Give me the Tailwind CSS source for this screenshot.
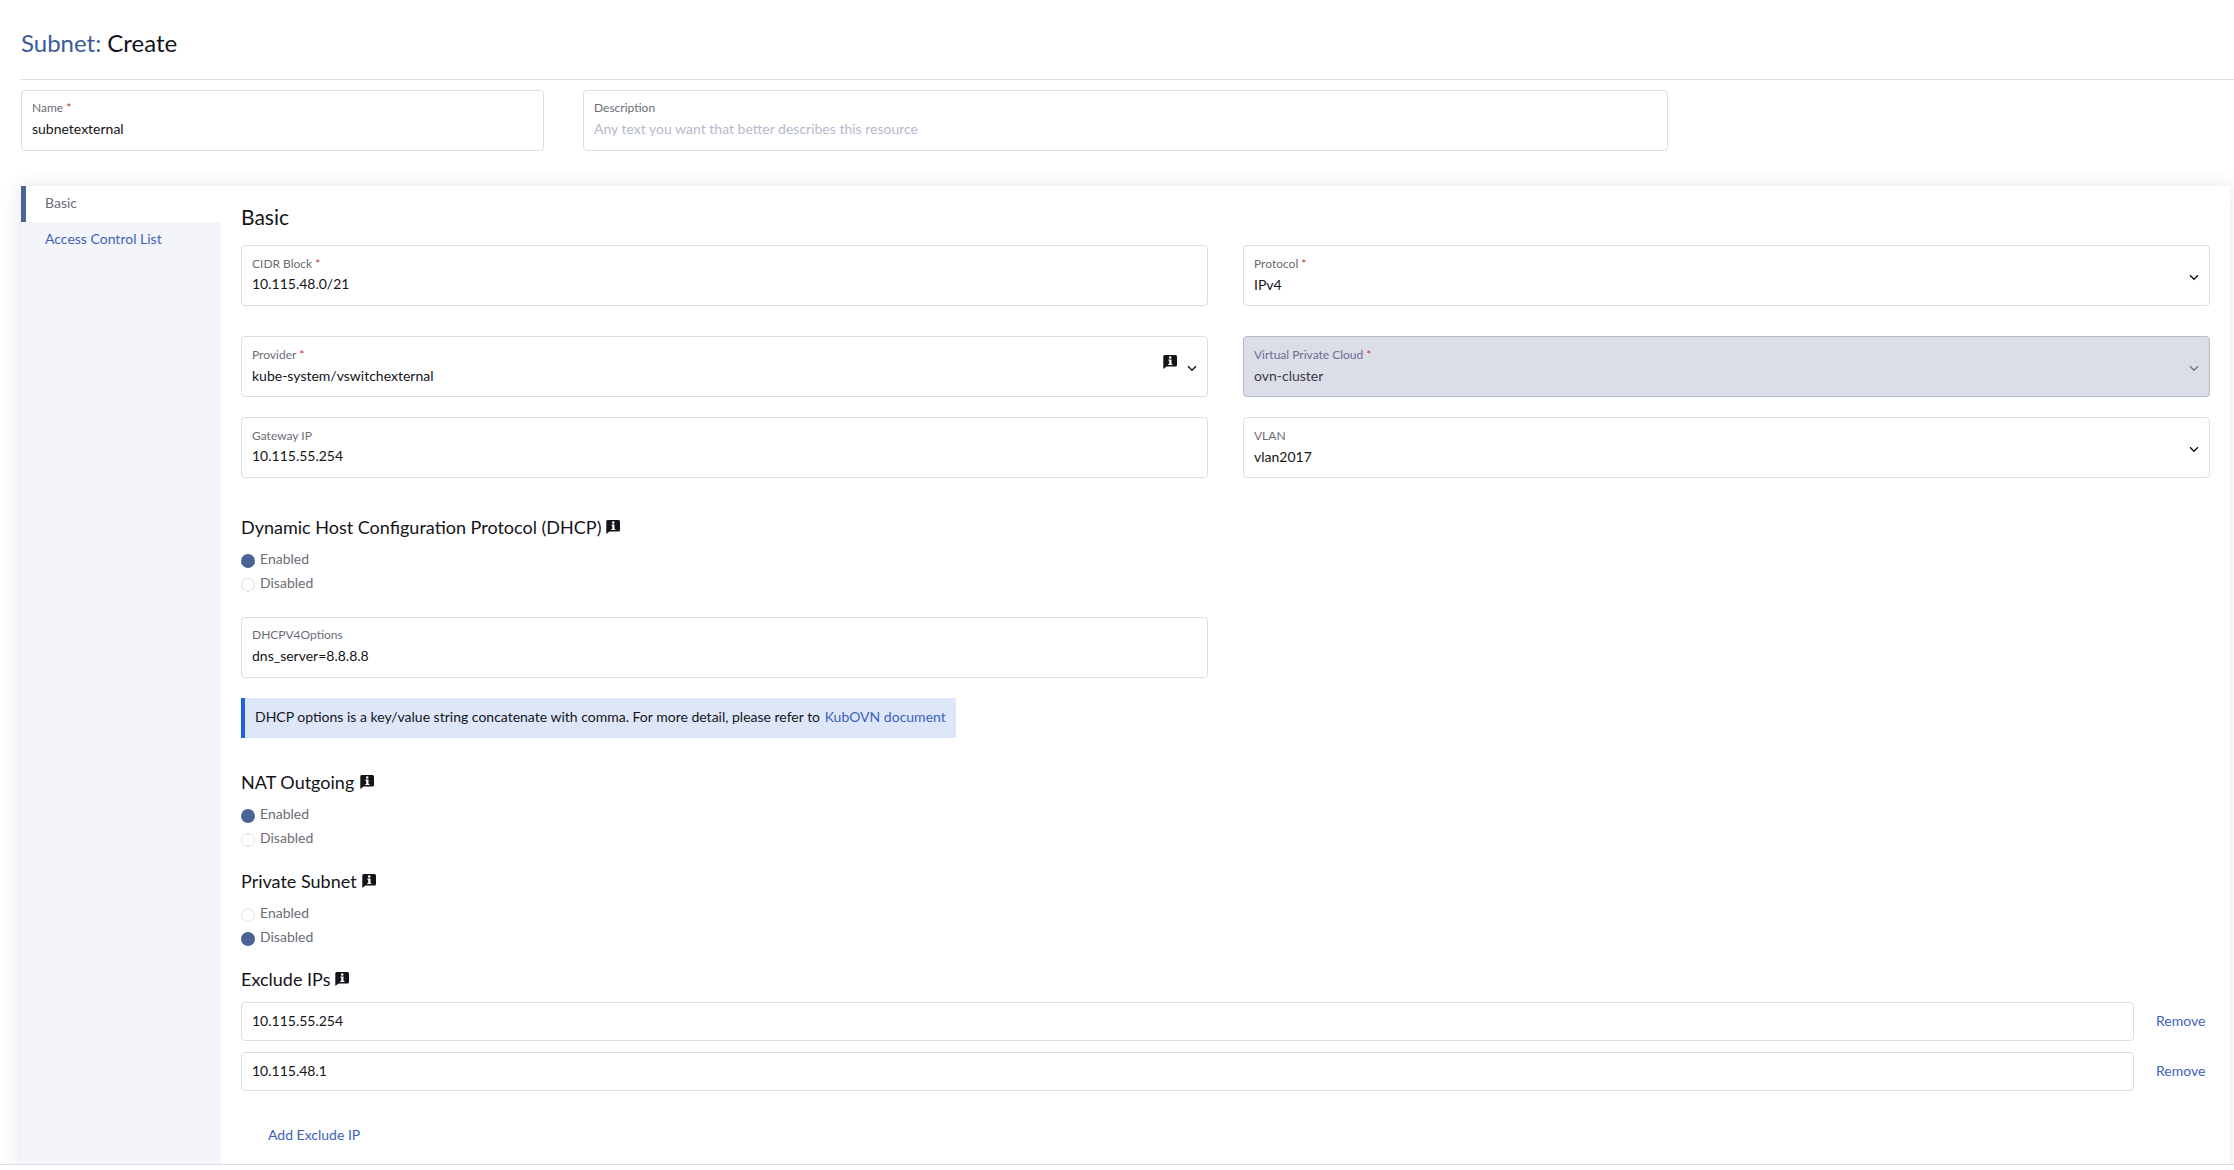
<!DOCTYPE html>
<html lang="en">

<head>
	<meta charset="UTF-8" />
	<meta name="viewport" content="width=device-width, initial-scale=1.0" />
	<title>Subnet: Create</title>
	<script src="https://cdn.jsdelivr.net/npm/@tailwindcss/browser@4"></script>
</head>

<body class="bg-white text-[#141419] text-sm [font-family:Lato,sans-serif] h-[1170px] overflow-hidden">

	<!-- icon used next to headings -->
	<svg class="hidden">
		<symbol id="info" viewBox="0 0 14 14">
			<path fill="#141419" d="M1.5 0h11A1.5 1.5 0 0 1 14 1.5v8.5a1.5 1.5 0 0 1-1.5 1.5H3.6L0.3 14V1.5A1.5 1.5 0 0 1 1.5 0z" />
			<circle cx="7.2" cy="2.6" r="1.25" fill="#fff" />
			<path fill="#fff" d="M5.5 4.6h3v4.3h0.9v1.2H5.2V8.9h1V5.8h-0.7z" />
		</symbol>
		<symbol id="chev" viewBox="0 0 10 7">
			<path d="M1 1.2l4 4 4-4" fill="none" stroke="#141419" stroke-width="1.4" />
		</symbol>
	</svg>

	<div class="h-[1164px] px-[21px] pr-[4px] overflow-hidden">
		<header class="h-[80px] border-b border-[#dcdee7] -mr-[4px] flex items-center pt-[6px]">
			<h1 class="text-2xl font-normal"><span class="text-[#3d5a98]">Subnet:</span> Create</h1>
		</header>

		<div class="flex gap-[39px] mt-[10px]">
			<div class="w-[523px] h-[61px] border border-[#dcdee7] rounded px-[10px] pt-[8px]">
				<div class="text-xs text-[#6c6c76] leading-[18px]">Name <span class="text-[#c0392b]">*</span></div>
				<div class="leading-[24px]">subnetexternal</div>
			</div>
			<div class="w-[1085px] h-[61px] border border-[#dcdee7] rounded px-[10px] pt-[8px]">
				<div class="text-xs text-[#6c6c76] leading-[18px]">Description</div>
				<div class="leading-[24px] text-[#b6b9cc]">Any text you want that better describes this resource</div>
			</div>
		</div>

		<div class="flex mt-[35px] h-[1000px] bg-white shadow-[0_0_20px_rgba(40,50,100,0.12)]">
			<aside class="w-[200px] shrink-0 bg-[#f4f5fa]">
				<div class="h-[36px] bg-white border-l-[5px] border-[#4a6497] pl-[19px] pb-[2px] flex items-center text-[#6c6c76]">Basic</div>
				<div class="h-[36px] pl-[24px] pb-[2px] flex items-center text-[#3d62b8]">Access Control List</div>
			</aside>

			<section class="flex-1 pl-[20px] pr-[20px]">
				<h2 class="h-[59px] pt-[15px] text-[21px] leading-[32px]">Basic</h2>

				<div class="grid grid-cols-[967px_967px] gap-x-[35px]">
					<div class="h-[61px] border border-[#dcdee7] rounded px-[10px] pt-[9px]">
						<div class="text-xs text-[#6c6c76] leading-[18px]">CIDR Block <span class="text-[#c0392b]">*</span></div>
						<div class="leading-[22px]">10.115.48.0/21</div>
					</div>
					<div class="h-[61px] border border-[#dcdee7] rounded px-[10px] pt-[9px] flex items-center justify-between">
						<div class="self-start">
							<div class="text-xs text-[#6c6c76] leading-[18px]">Protocol <span class="text-[#c0392b]">*</span></div>
							<div class="leading-[24px]">IPv4</div>
						</div>
						<svg class="w-[10px] h-[7px] -mt-[5px]"><use href="#chev" /></svg>
					</div>

					<div class="mt-[30px] h-[61px] border border-[#dcdee7] rounded px-[10px] pt-[9px] flex items-center justify-between">
						<div class="self-start">
							<div class="text-xs text-[#6c6c76] leading-[18px]">Provider <span class="text-[#c0392b]">*</span></div>
							<div class="leading-[24px]">kube-system/vswitchexternal</div>
						</div>
						<div class="flex items-start gap-[10px] -mt-[15px]">
							<svg class="w-[14px] h-[14px]"><use href="#info" /></svg>
							<svg class="w-[10px] h-[7px] mt-[10px]"><use href="#chev" /></svg>
						</div>
					</div>
					<div class="mt-[30px] h-[61px] border border-[#b6b9cc] bg-[#dcdee7] rounded px-[10px] pt-[9px] flex items-center justify-between">
						<div class="self-start">
							<div class="text-xs text-[#6c6c92] leading-[18px]">Virtual Private Cloud <span class="text-[#c0392b]">*</span></div>
							<div class="leading-[24px] text-[#3a3a48]">ovn-cluster</div>
						</div>
						<svg class="w-[10px] h-[7px] -mt-[5px] opacity-50"><use href="#chev" /></svg>
					</div>

					<div class="mt-[20px] h-[61px] border border-[#dcdee7] rounded px-[10px] pt-[9px]">
						<div class="text-xs text-[#6c6c76] leading-[18px]">Gateway IP</div>
						<div class="leading-[22px]">10.115.55.254</div>
					</div>
					<div class="mt-[20px] h-[61px] border border-[#dcdee7] rounded px-[10px] pt-[9px] flex items-center justify-between">
						<div class="self-start">
							<div class="text-xs text-[#6c6c76] leading-[18px]">VLAN</div>
							<div class="leading-[24px]">vlan2017</div>
						</div>
						<svg class="w-[10px] h-[7px] -mt-[5px]"><use href="#chev" /></svg>
					</div>
				</div>

				<h3 class="mt-[34px] h-[30px] flex items-center gap-[5px] text-lg font-normal">Dynamic Host Configuration Protocol (DHCP) <svg class="w-[14px] h-[14px]"><use href="#info" /></svg></h3>
				<div class="mt-[5px] text-[#6c6c76]">
					<div class="h-[24px] flex items-center gap-[5px]"><span class="w-[14px] h-[14px] mt-[4px] rounded-full bg-[#4a6497]"></span><span class="leading-none">Enabled</span></div>
					<div class="h-[24px] flex items-center gap-[5px]"><span class="w-[14px] h-[14px] mt-[4px] rounded-full border border-[#dcdee7]"></span><span class="leading-none">Disabled</span></div>
				</div>

				<div class="mt-[22px] w-[967px] h-[61px] border border-[#dcdee7] rounded px-[10px] pt-[8px]">
					<div class="text-xs text-[#6c6c76] leading-[18px]">DHCPV4Options</div>
					<div class="leading-[24px]">dns_server=8.8.8.8</div>
				</div>

				<div class="mt-[20px] w-[715px] h-[40px] bg-[#dee7fa] border-l-[4px] border-[#1f63e0] pl-[10px] pb-[2px] flex items-center">
					<span>DHCP options is a key/value string concatenate with comma. For more detail, please refer to <a class="text-[#3d62b8] ml-[1px]">KubOVN document</a></span>
				</div>

				<h3 class="mt-[29px] h-[30px] flex items-center gap-[6px] text-lg font-normal">NAT Outgoing <svg class="w-[14px] h-[14px]"><use href="#info" /></svg></h3>
				<div class="mt-[5px] text-[#6c6c76]">
					<div class="h-[24px] flex items-center gap-[5px]"><span class="w-[14px] h-[14px] mt-[4px] rounded-full bg-[#4a6497]"></span><span class="leading-none">Enabled</span></div>
					<div class="h-[24px] flex items-center gap-[5px]"><span class="w-[14px] h-[14px] mt-[4px] rounded-full border border-[#dcdee7]"></span><span class="leading-none">Disabled</span></div>
				</div>

				<h3 class="mt-[16px] h-[30px] flex items-center gap-[5px] text-lg font-normal">Private Subnet <svg class="w-[14px] h-[14px]"><use href="#info" /></svg></h3>
				<div class="mt-[5px] text-[#6c6c76]">
					<div class="h-[24px] flex items-center gap-[5px]"><span class="w-[14px] h-[14px] mt-[4px] rounded-full border border-[#dcdee7]"></span><span class="leading-none">Enabled</span></div>
					<div class="h-[24px] flex items-center gap-[5px]"><span class="w-[14px] h-[14px] mt-[4px] rounded-full bg-[#4a6497]"></span><span class="leading-none">Disabled</span></div>
				</div>

				<h3 class="mt-[15px] h-[30px] flex items-center gap-[5px] text-lg font-normal">Exclude IPs <svg class="w-[14px] h-[14px]"><use href="#info" /></svg></h3>

				<div class="mt-[8px] flex items-center">
					<div class="w-[1893px] h-[39px] border border-[#dcdee7] rounded px-[10px] pb-[2px] flex items-center">10.115.55.254</div>
					<a class="ml-[22px] mb-[2px] text-[#3d62b8]">Remove</a>
				</div>
				<div class="mt-[11px] flex items-center">
					<div class="w-[1893px] h-[39px] border border-[#dcdee7] rounded px-[10px] pb-[2px] flex items-center">10.115.48.1</div>
					<a class="ml-[22px] mb-[2px] text-[#3d62b8]">Remove</a>
				</div>

				<a class="block mt-[34px] ml-[27px] text-[#3d62b8]">Add Exclude IP</a>
			</section>
		</div>
	</div>

	<div class="h-[6px] border-t border-[#dcdee7] bg-white"></div>

</body>

</html>
